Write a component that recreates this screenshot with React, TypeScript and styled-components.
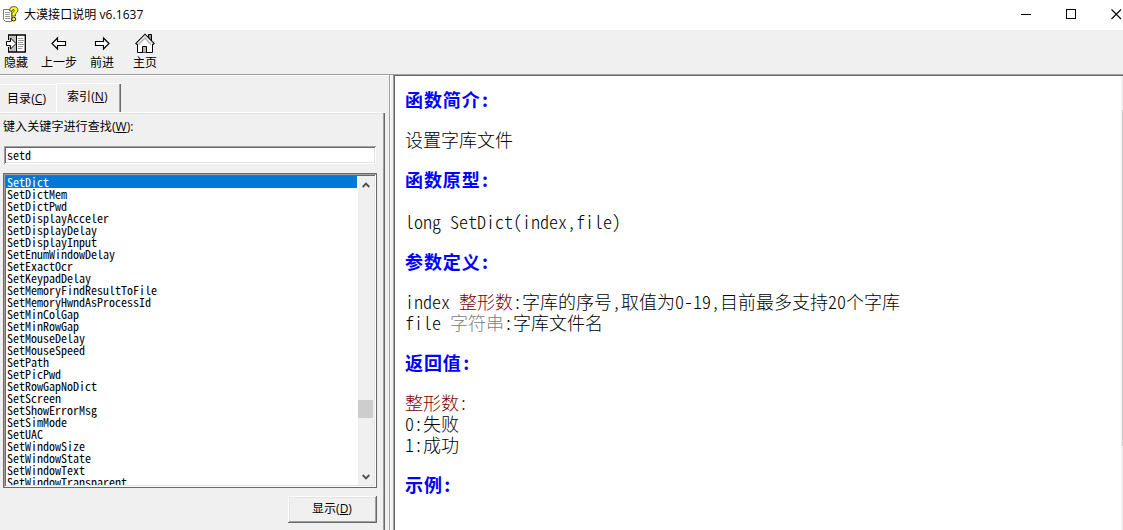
import { ReactNode, useState } from "react";
import styled, { createGlobalStyle, css } from "styled-components";

const keywords = [
  "SetDict", "SetDictMem", "SetDictPwd", "SetDisplayAcceler", "SetDisplayDelay",
  "SetDisplayInput", "SetEnumWindowDelay", "SetExactOcr", "SetKeypadDelay",
  "SetMemoryFindResultToFile", "SetMemoryHwndAsProcessId", "SetMinColGap",
  "SetMinRowGap", "SetMouseDelay", "SetMouseSpeed", "SetPath", "SetPicPwd",
  "SetRowGapNoDict", "SetScreen", "SetShowErrorMsg", "SetSimMode", "SetUAC",
  "SetWindowSize", "SetWindowState", "SetWindowText", "SetWindowTransparent",
];

export default function App() {
  const [selected, setSelected] = useState("SetDict");
  const [query, setQuery] = useState("setd");

  return (
    <Window>
      <GlobalStyle />
      <TitleBar>
        <HelpIcon />
        <Title>大漠接口说明 v6.1637</Title>
        <Controls>
          <svg width="11" height="11" shapeRendering="crispEdges">
            <path d="M0 5.5H10" stroke="#000" />
          </svg>
          <svg width="11" height="11" shapeRendering="crispEdges">
            <path d="M.5 .5H9.5V9.5H.5Z" stroke="#000" fill="none" />
          </svg>
          <svg width="11" height="11">
            <path d="M.5 .5L10 10M10 .5L.5 10" stroke="#000" strokeWidth="1.1" />
          </svg>
        </Controls>
      </TitleBar>
      <Toolbar>
        <Tool $width={32} icon={<HideIcon />}>隐藏</Tool>
        <Tool $width={54} icon={<ArrowIcon />}>上一步</Tool>
        <Tool $width={32} icon={<ArrowIcon flip />}>前进</Tool>
        <Tool $width={54} icon={<HomeIcon />}>主页</Tool>
      </Toolbar>
      <Main>
        <Sidebar>
          <Tabs>
            <Tab>目录(<u>C</u>)</Tab>
            <Tab $active>索引(<u>N</u>)</Tab>
          </Tabs>
          <Page>
            <Label>键入关键字进行查找(<u>W</u>):</Label>
            <Search value={query} onChange={(e) => setQuery(e.target.value)} />
            <ListBox>
              <ListInner>
                <List>
                  {keywords.map((k) => (
                    <Item key={k} $selected={k === selected} onClick={() => setSelected(k)}>
                      {k}
                    </Item>
                  ))}
                </List>
                <ScrollBar>
                  <Chevron />
                  <Thumb />
                  <Chevron down />
                </ScrollBar>
              </ListInner>
            </ListBox>
            <ShowButton>显示(<u>D</u>)</ShowButton>
          </Page>
        </Sidebar>
        <Splitter />
        <Content>
          <Article>
            <Heading>函数简介:</Heading>
            <P>设置字库文件</P>
            <Heading>函数原型:</Heading>
            <P $top={20}>long SetDict(index,file)</P>
            <Heading>参数定义:</Heading>
            <P>
              index <Type $color="#800000">整形数</Type>:字库的序号,取值为0-19,目前最多支持20个字库
              <br />
              file <Type $color="#808080">字符串</Type>:字库文件名
            </P>
            <Heading>返回值:</Heading>
            <P>
              <Type $color="#800000">整形数:</Type>
              <br />
              0:失败
              <br />
              1:成功
            </P>
            <Heading>示例:</Heading>
          </Article>
          <PageScroll>
            <PageThumb />
          </PageScroll>
        </Content>
      </Main>
    </Window>
  );
}

function Tool({ $width, icon, children }: { $width: number; icon: ReactNode; children: ReactNode }) {
  return (
    <ToolButton $width={$width}>
      <IconBox>{icon}</IconBox>
      <span>{children}</span>
    </ToolButton>
  );
}

function HelpIcon() {
  return (
    <svg width="16" height="16" viewBox="0 0 16 16">
      <path d="M.5 3.5H8.5V15.5H2.5L.5 13.5Z" fill="#fff" stroke="#777" />
      <path d="M2 6.5H7M2 8.5H7M2 10.5H7M2 12.5H7" stroke="#999" />
      <path d="M6.8 5V3.2Q7 .7 10.5 .6Q14.9 .7 15 4Q15 6 12.5 7.8V10H8.8V7.5Q11.5 5.5 11.4 4.3Q11.2 3.2 10 3.5L9.8 5Z" fill="#ff0" stroke="#444" strokeWidth=".9" />
      <path d="M8.8 12Q10.7 10.5 12.6 12V14.2Q10.7 15.8 8.8 14.2Z" fill="#ff0" stroke="#222" />
    </svg>
  );
}

function HideIcon() {
  return (
    <svg width="20" height="19" viewBox="0 0 20 19">
      <path d="M2.5 .5H19.5V18.5H2.5Z" fill="#fff" />
      <path d="M3 1H10V18H3Z" fill="#c0c0c0" />
      <path d="M2 1H19.3V18H2" fill="none" stroke="#000" strokeWidth="1.3" />
      <path d="M10.5 1V18M2.5 1V6M2.5 13V18" stroke="#000" />
      <path d="M12 4.5H17M12 6.5H18M12 8.5H17M12 10.5H18M12 12.5H17M12 14.5H16" stroke="#999" />
      <path d="M.5 7.5H4.5V4L10 9.5L4.5 15V11.5H.5Z" fill="#fff" stroke="#000" />
    </svg>
  );
}

function ArrowIcon({ flip }: { flip?: boolean }) {
  return (
    <svg width="16" height="19" viewBox="0 0 16 19">
      <path
        d="M1 9.5L6.5 4V7.5H14.5V11.5H6.5V15Z"
        transform={flip ? "translate(16 0) scale(-1 1)" : undefined}
        fill="#fff"
        stroke="#000"
        strokeWidth="1.15"
      />
    </svg>
  );
}

function HomeIcon() {
  return (
    <svg width="20" height="21" viewBox="0 0 20 21">
      <path d="M13.5 5V1.5H16.5V8.5" fill="#909090" stroke="#000" />
      <path d="M3 19.5V10L10 3L17 10V19.5Z" fill="#fff" />
      <path d="M3.5 10.5L10 4V6L3.5 12.5Z" fill="#b0b0b0" />
      <path d="M16 10.5L10 4V6L16 12.5Z" fill="#b0b0b0" />
      <path d="M2.5 11V19.5H17.5V11" fill="none" stroke="#000" />
      <path d="M2.8 12L.8 10.5L10 1.2L19.2 10.5L17.2 12" fill="none" stroke="#000" strokeWidth="1.1" />
      <path d="M1.6 10.6L10 2.4L18.4 10.6" fill="none" stroke="#a0a0a0" strokeWidth=".8" />
      <path d="M7.5 19.5V13.5H11.5V19.5" fill="#b8b8b8" stroke="#000" />
    </svg>
  );
}

function Chevron({ down }: { down?: boolean }) {
  return (
    <svg width="8" height="6" viewBox="0 0 8 6">
      <path d={down ? "M.7 1L4 4.3L7.3 1" : "M.7 5L4 1.7L7.3 5"} fill="none" stroke="#505050" strokeWidth="1.9" />
    </svg>
  );
}

const GlobalStyle = createGlobalStyle`
  * {
    box-sizing: border-box;
  }
  body {
    margin: 0;
    overflow: hidden;
  }
  u {
    text-underline-offset: 1px;
  }
`;

// classic two pixel bevels
const sunken = css`
  box-shadow: inset 1px 1px #a0a0a0, inset -1px -1px #fff, inset 2px 2px #696969, inset -2px -2px #e3e3e3;
`;

const raised = css`
  box-shadow: inset -1px -1px #696969, inset 1px 1px #fff, inset -2px -2px #a0a0a0, inset 2px 2px #e3e3e3;
`;

// every latin glyph takes half the width of a chinese one
const halfWidth = css`
  font-family: "Noto Sans CJK SC", monospace;
  font-feature-settings: "hwid", "liga" 0;
`;

const Window = styled.div`
  width: 1123px;
  height: 530px;
  display: flex;
  flex-direction: column;
  background: #f0f0f0;
  color: #000;
  font-family: "Open Sans", "Noto Sans CJK SC", sans-serif;
  font-size: 12px;
  line-height: 16px;
`;

const TitleBar = styled.header`
  height: 30px;
  flex: none;
  display: flex;
  align-items: center;
  padding: 0 1px 2px 3px;
  background: #fff;
`;

const Title = styled.span`
  margin: 2px 0 0 5px;
  letter-spacing: 0.06px;
`;

const Controls = styled.div`
  margin-left: auto;
  display: flex;
  gap: 34px;
`;

const Toolbar = styled.div`
  height: 45px;
  flex: none;
  display: flex;
  border-bottom: 1px solid #a0a0a0;
`;

const ToolButton = styled.div<{ $width: number }>`
  width: ${(p) => p.$width}px;
  display: flex;
  flex-direction: column;
  align-items: center;
  justify-content: space-between;
  padding: 3px 0;
  white-space: nowrap;
`;

const IconBox = styled.div`
  height: 21px;
  display: flex;
  align-items: center;
`;

const Main = styled.div`
  flex: 1;
  min-height: 0;
  display: flex;
`;

const Sidebar = styled.aside`
  width: 389px;
  display: flex;
  flex-direction: column;
  border-top: 1px solid #fff;
  padding: 7px 4px 0 0;
`;

const Tabs = styled.div`
  height: 29px;
  display: flex;
  align-items: flex-end;
`;

const Tab = styled.div<{ $active?: boolean }>`
  width: 56px;
  height: 28px;
  padding: 6px 0 0 7px;
  border-top: 1px solid #fff;
  letter-spacing: 0.1px;
  ${(p) =>
    p.$active &&
    css`
      width: 65px;
      height: 30px;
      margin-bottom: -1px;
      padding: 5px 0 0 10px;
      background: #f0f0f0;
      border-left: 1px solid #fff;
      box-shadow: inset -1px 0 #696969, inset -2px 0 #a0a0a0;
    `}
`;

const Page = styled.div`
  flex: 1;
  display: flex;
  flex-direction: column;
  border-top: 1px solid #fff;
  box-shadow: inset -1px 0 #696969, inset -2px 0 #a0a0a0, inset 0 1px #e3e3e3;
`;

const Label = styled.label`
  margin: 6px 0 0 3px;
  letter-spacing: 0.1px;
`;

const Search = styled.input`
  ${halfWidth}
  ${sunken}
  width: 372px;
  height: 18px;
  margin: 11px 0 0 4px;
  padding: 0 3px 2px;
  border: 0;
  outline: 0;
  background: #fff;
  font-size: 12px;
`;

const ListBox = styled.div`
  width: 374px;
  height: 315px;
  margin: 9px 0 0 3px;
  border: 1px solid #696969;
`;

const ListInner = styled.div`
  ${sunken}
  height: 100%;
  display: flex;
  padding: 2px;
  background: #fff;
`;

const List = styled.div`
  ${halfWidth}
  flex: 1;
  overflow: hidden;
  font-size: 12px;
  line-height: 11px;
`;

const Item = styled.div<{ $selected: boolean }>`
  height: 12px;
  padding-left: 1px;
  color: ${(p) => (p.$selected ? "#fff" : "#000")};
  background: ${(p) => (p.$selected ? "#0078d7" : "none")};
`;

const ScrollBar = styled.div`
  width: 16px;
  margin-left: 1px;
  display: flex;
  flex-direction: column;
  align-items: center;
  padding: 6px 1px 5px 0;
  background: #f0f0f0;
`;

const Thumb = styled.div`
  width: 15px;
  height: 18px;
  margin: auto 0 56px;
  background: #cdcdcd;
`;

const ShowButton = styled.button`
  ${raised}
  width: 89px;
  height: 27px;
  margin: 8px 0 0 288px;
  padding: 0 1px 2px 0;
  border: 0;
  background: #f0f0f0;
  font: inherit;
`;

const Splitter = styled.div`
  width: 4px;
  border-left: 1px solid #a0a0a0;
  box-shadow: inset 1px 0 #fff;
`;

const Content = styled.main`
  flex: 1;
  min-width: 0;
  display: flex;
  background: #fff;
  border-top: 1px solid #696969;
  border-left: 1px solid #a0a0a0;
  box-shadow: inset 1px 0 #696969;
`;

const Article = styled.article`
  ${halfWidth}
  flex: 1;
  padding: 12px 0 0 11px;
  overflow: hidden;
  font-size: 18px;
  font-weight: 300;
  line-height: 21px;
`;

const Heading = styled.h2`
  margin: 0;
  font-size: 18px;
  line-height: 23px;
  letter-spacing: 0.9px;
  color: #00f;
`;

const P = styled.p<{ $top?: number }>`
  margin: ${(p) => p.$top || 18}px 0 18px;
`;

const Type = styled.span<{ $color: string }>`
  color: ${(p) => p.$color};
`;

const PageScroll = styled.div`
  width: 2px;
  background: #f0f0f0;
`;

const PageThumb = styled.div`
  height: 336px;
  margin: 34px 0 0 1px;
  background: #cdcdcd;
`;
